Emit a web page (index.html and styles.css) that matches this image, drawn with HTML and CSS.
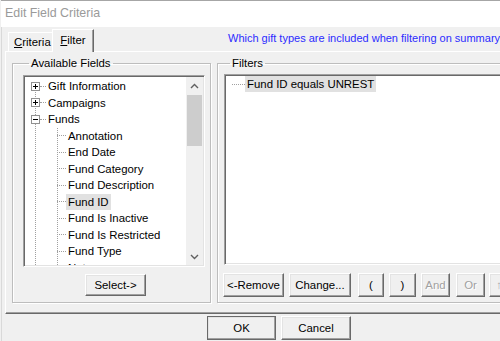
FILE: index.html
```html
<!DOCTYPE html>
<html lang="en">
<head>
    <meta charset="UTF-8">
    <title>Edit Field Criteria</title>
    <link rel="stylesheet" href="styles.css">
</head>
<body>
<div class="window">
    <div class="titlebar">Edit Field Criteria</div>
    <div class="client">
        <div class="tabrow">
            <div class="tab"><u>C</u>riteria</div>
            <div class="tab active"><u>F</u>ilter</div>
            <div class="hint">Which gift types are included when filtering on summary</div>
        </div>

        <div class="panel">
            <fieldset class="group fields">
                <legend>Available Fields</legend>
                <div class="listbox tree-box">
                    <div class="tree">
                        <div class="row root">
                            <svg class="exp" width="9" height="9" viewBox="0 0 9 9"><rect x="0.5" y="0.5" width="8" height="8" fill="#fff" stroke="#919191"/><path d="M2 4.5h5M4.5 2v5" stroke="#000"/></svg>
                            <span class="hline"></span><span class="label">Gift Information</span>
                        </div>
                        <div class="row root">
                            <svg class="exp" width="9" height="9" viewBox="0 0 9 9"><rect x="0.5" y="0.5" width="8" height="8" fill="#fff" stroke="#919191"/><path d="M2 4.5h5M4.5 2v5" stroke="#000"/></svg>
                            <span class="hline"></span><span class="label">Campaigns</span>
                        </div>
                        <div class="row root">
                            <svg class="exp" width="9" height="9" viewBox="0 0 9 9"><rect x="0.5" y="0.5" width="8" height="8" fill="#fff" stroke="#919191"/><path d="M2 4.5h5" stroke="#000"/></svg>
                            <span class="hline"></span><span class="label">Funds</span>
                        </div>
                        <div class="row child"><span class="hline"></span><span class="label">Annotation</span></div>
                        <div class="row child"><span class="hline"></span><span class="label">End Date</span></div>
                        <div class="row child"><span class="hline"></span><span class="label">Fund Category</span></div>
                        <div class="row child"><span class="hline"></span><span class="label">Fund Description</span></div>
                        <div class="row child"><span class="hline"></span><span class="label sel">Fund ID</span></div>
                        <div class="row child"><span class="hline"></span><span class="label">Fund Is Inactive</span></div>
                        <div class="row child"><span class="hline"></span><span class="label">Fund Is Restricted</span></div>
                        <div class="row child"><span class="hline"></span><span class="label">Fund Type</span></div>
                        <div class="row child"><span class="hline"></span><span class="label">Notes</span></div>
                    </div>
                    <div class="scrollbar">
                        <div class="arrow">
                            <svg width="9" height="6" viewBox="0 0 9 6"><path d="M1 5L4.5 1.5L8 5" fill="none" stroke="#606060" stroke-width="1.4"/></svg>
                        </div>
                        <div class="track"><div class="thumb"></div></div>
                        <div class="arrow">
                            <svg width="9" height="6" viewBox="0 0 9 6"><path d="M1 1L4.5 4.5L8 1" fill="none" stroke="#606060" stroke-width="1.4"/></svg>
                        </div>
                    </div>
                </div>
                <button class="btn select">Select-&gt;</button>
            </fieldset>

            <fieldset class="group filters">
                <legend>Filters</legend>
                <div class="listbox filter-box">
                    <div class="filter-item"><span class="hline"></span><span class="label sel">Fund ID equals UNREST</span></div>
                </div>
                <div class="btn-row">
                    <button class="btn b-remove">&lt;-Remove</button>
                    <button class="btn b-change">Change...</button>
                    <button class="btn b-paren">(</button>
                    <button class="btn b-paren2">)</button>
                    <button class="btn b-and" disabled>And</button>
                    <button class="btn b-or" disabled>Or</button>
                    <button class="btn b-up" disabled>&uarr;</button>
                </div>
            </fieldset>
        </div>

        <div class="footer">
            <button class="btn default">OK</button>
            <button class="btn cancel">Cancel</button>
        </div>
    </div>
</div>
</body>
</html>
```

FILE: styles.css
```css
* {
    margin: 0;
    padding: 0;
    box-sizing: border-box;
    font-family: "Liberation Sans", Arial, sans-serif;
}
body {
    width: 500px;
    height: 341px;
    overflow: hidden;
    background: #f0f0f0;
    font-size: 11.4px;
    color: #000;
}
.window {
    width: 600px;
    height: 341px;
    padding-left: 1px;
}
.titlebar {
    height: 27px;
    background: #fff;
    border-top: 1px solid #a6a6a6;
    padding-left: 4px;
    line-height: 25px;
    font-size: 12.4px;
    color: #9a9a9a;
}
.client {
    height: 314px;
    border-left: 1px solid #d9d9d9;
    padding-left: 3px;
}

/* tabs */
.tabrow {
    height: 24px;
    display: flex;
    align-items: flex-end;
    padding-left: 3px;
}
.tab {
    height: 19px;
    line-height: 18px;
    padding: 0 5px;
    border-top: 1px solid #fff;
    border-left: 1px solid #fff;
    width: 44px;
    text-align: center;
}
.tab.active {
    height: 23px;
    width: 42px;
    margin-bottom: -1px;
    line-height: 21px;
    background: #f0f0f0;
    border-right: 1px solid #696969;
    box-shadow: inset -1px 0 #a0a0a0;
}
.hint {
    align-self: flex-start;
    margin-top: 4px;
    margin-left: 134px;
    white-space: nowrap;
    color: #2b2bff;
    font-size: 11px;
    line-height: 14px;
}

/* tab panel */
.panel {
    height: 263px;
    display: flex;
    padding: 4px 0 0 6px;
    border-top: 1px solid #fff;
    border-left: 1px solid #fff;
    border-bottom: 1px solid #696969;
    box-shadow: inset 0 -1px #a0a0a0;
}
.group {
    height: 247px;
    border: 1px solid #bdbdbd;
    box-shadow: inset 1px 1px #fff, 1px 1px #fff;
    min-inline-size: 0;
}
.group legend {
    margin-left: 6px;
    padding: 0 2px;
    line-height: 14px;
}
.fields {
    width: 199px;
    padding: 0 0 0 10px;
}
.filters {
    width: 360px;
    margin-left: 6px;
    padding: 0 0 0 6px;
}

/* list boxes */
.listbox {
    background: #fff;
    border: 1px solid;
    border-color: #a0a0a0 #fff #fff #a0a0a0;
    box-shadow: inset 1px 1px #696969, inset -1px -1px #e3e3e3;
    padding: 1px;
    overflow: hidden;
}
.tree-box {
    width: 182px;
    height: 192px;
    margin-top: 5px;
    display: flex;
}
.tree {
    flex: 1;
    padding-top: 1px;
    overflow: hidden;
    background:
        repeating-linear-gradient(to bottom, #a0a0a0 0 1px, transparent 1px 2px) 10px 9px / 1px 100% no-repeat,
        repeating-linear-gradient(to bottom, #a0a0a0 0 1px, transparent 1px 2px) 32px 51px / 1px 100% no-repeat;
}
.row {
    height: 16.5px;
    display: flex;
    align-items: center;
    white-space: nowrap;
}
.exp {
    margin-left: 6px;
    flex: none;
}
.hline {
    border-top: 1px dotted #a0a0a0;
    flex: none;
}
.root .hline {
    width: 6px;
}
.child .hline {
    width: 9px;
    margin-left: 32px;
}
.label {
    padding: 0 2px;
    line-height: 16px;
}
.label.sel {
    background: #e1e1e1;
}

.scrollbar {
    width: 17px;
    display: flex;
    flex-direction: column;
    background: #f0f0f0;
}
.arrow {
    height: 17px;
    display: flex;
    align-items: center;
    justify-content: center;
}
.track {
    flex: 1;
    padding: 1px 1px 0;
}
.thumb {
    height: 51px;
    background: #cdcdcd;
}

.filter-box {
    width: 300px;
    height: 191px;
    margin-top: 4px;
    padding-top: 1px;
}
.filter-item {
    display: flex;
    align-items: center;
    height: 16px;
}
.filter-item .hline {
    width: 13px;
    margin-left: 6px;
}

/* buttons */
.btn {
    display: block;
    height: 23px;
    background: #f0f0f0;
    border: 1px solid;
    border-color: #fff #696969 #696969 #fff;
    box-shadow: inset -1px -1px #a0a0a0, inset 1px 1px #e3e3e3;
    font-size: 11.4px;
    color: #000;
}
.btn:disabled {
    color: #a0a0a0;
    text-shadow: 1px 1px #fff;
}
.select {
    width: 61px;
    height: 22px;
    margin: 7px 0 0 62px;
}
.btn-row {
    display: flex;
    margin-top: 8px;
    margin-left: -1px;
}
.btn-row .btn {
    height: 24px;
}
.b-remove { width: 61px; }
.b-change { width: 62px; margin-left: 5px; }
.b-paren { width: 26px; margin-left: 7px; }
.b-paren2 { width: 27px; margin-left: 5px; }
.b-and { width: 29px; margin-left: 5px; }
.b-or { width: 29px; margin-left: 6px; }
.b-up { width: 20px; margin-left: 4px; }

.footer {
    display: flex;
    padding: 2px 0 0 202px;
}
.footer .btn {
    height: 24px;
}
.default {
    width: 69px;
    border-color: #696969;
}
.cancel {
    width: 70px;
    margin-left: 5px;
}
```
